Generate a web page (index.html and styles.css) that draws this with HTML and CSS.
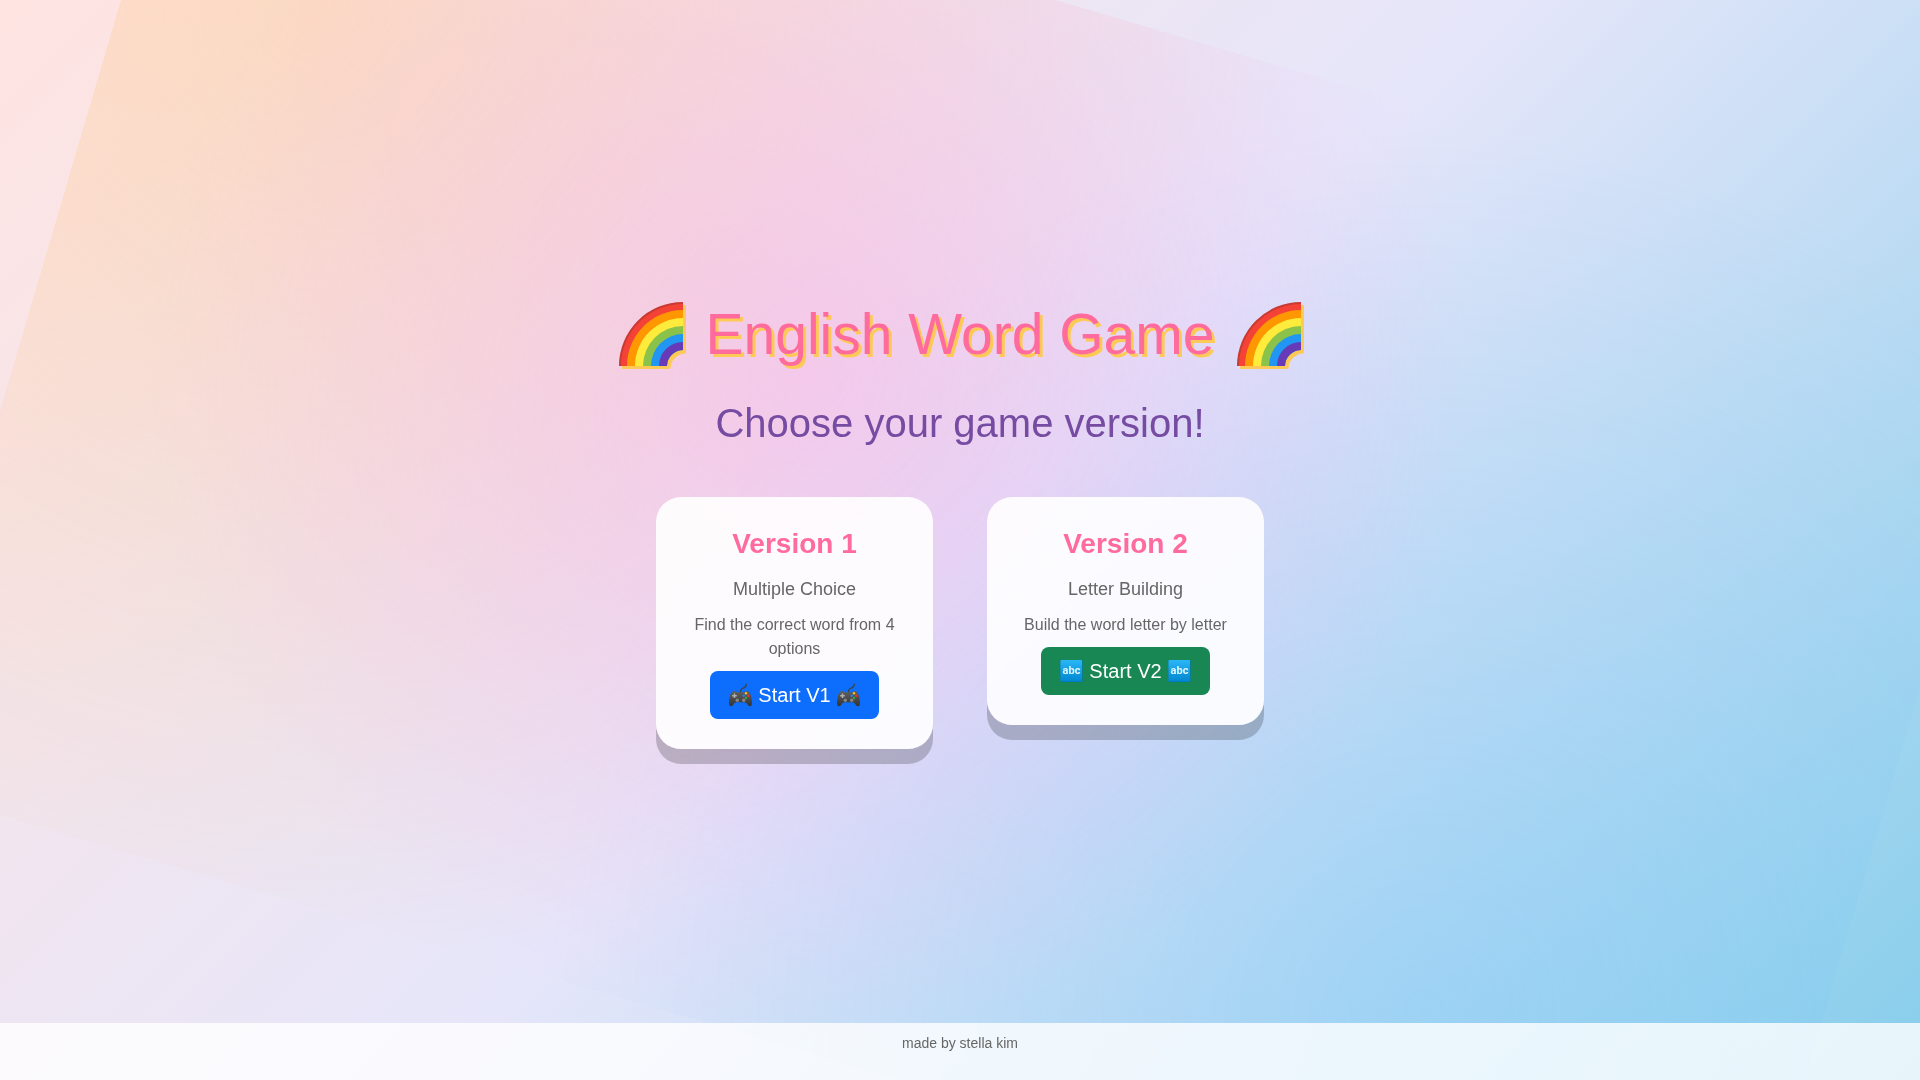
FILE: index.html
```
<!DOCTYPE html>
<html lang="en">
<head>
    <meta charset="UTF-8">
    <meta name="viewport" content="width=device-width, initial-scale=1.0">
    <title>English Word Game</title>
    <link rel="stylesheet" href="styles.css">
</head>
<body>
    <svg class="sprite" aria-hidden="true">
        <defs>
            <linearGradient id="pad-fill" x1="0" y1="0" x2="0" y2="1">
                <stop offset="0" stop-color="#616161" />
                <stop offset="1" stop-color="#333" />
            </linearGradient>
            <linearGradient id="abc-fill" x1="0" y1="0" x2="0" y2="1">
                <stop offset="0" stop-color="#29b6f6" />
                <stop offset="1" stop-color="#0288d1" />
            </linearGradient>
        </defs>
        <symbol id="rainbow" viewBox="0 0 64 64">
            <path d="M0 64A64 64 0 0 1 64 0V48A16 16 0 0 0 48 64Z" fill="#c93a32" />
            <path d="M2 64A62 62 0 0 1 64 2V48A16 16 0 0 0 48 64Z" fill="#f44336" />
            <path d="M8 64A56 56 0 0 1 64 8V48A16 16 0 0 0 48 64Z" fill="#ff9800" />
            <path d="M16 64A48 48 0 0 1 64 16V48A16 16 0 0 0 48 64Z" fill="#ffeb3b" />
            <path d="M24 64A40 40 0 0 1 64 24V48A16 16 0 0 0 48 64Z" fill="#8bc34a" />
            <path d="M32 64A32 32 0 0 1 64 32V48A16 16 0 0 0 48 64Z" fill="#2196f3" />
            <path d="M40 64A24 24 0 0 1 64 40V48A16 16 0 0 0 48 64Z" fill="#673ab7" />
        </symbol>
        <symbol id="gamepad" viewBox="0 0 25 24">
            <path d="M12.5 10C12.3 7 13 5.6 15 5.1S18.2 3.6 18.3 1.2" fill="none" stroke="#37474f" stroke-width="1.3" stroke-linecap="round" />
            <path d="M5 8.2C7 7.7 8 9.2 9.5 9.2H15.5C17 9.2 18 7.7 20 8.2C22.5 8.8 24 15 24 19.5C24 22.3 23.3 23.3 22 23.3C19.5 23.3 19.5 19.3 16.5 19.3H8.5C5.5 19.3 5.5 23.3 3 23.3C1.7 23.3 1 22.3 1 19.5C1 15 2.5 8.8 5 8.2Z" fill="url(#pad-fill)" />
            <path d="M6.5 10.5V15M4.2 12.7H8.8" stroke="#b0b0b0" stroke-width="1.5" />
            <circle cx="9.3" cy="17.3" r="1.7" fill="#858585" />
            <circle cx="15.7" cy="17.3" r="1.7" fill="#858585" />
            <circle cx="18" cy="10.3" r="1.2" fill="#fbc02d" />
            <circle cx="15.7" cy="12.7" r="1.2" fill="#1e88e5" />
            <circle cx="20.3" cy="12.7" r="1.2" fill="#e53935" />
            <circle cx="18" cy="15" r="1.2" fill="#43a047" />
        </symbol>
    </svg>
    <main class="home">
        <h1 class="title">
            <svg class="rainbow" aria-hidden="true"><use href="#rainbow" /></svg>
            English Word Game
            <svg class="rainbow" aria-hidden="true"><use href="#rainbow" /></svg>
        </h1>
        <h2 class="subtitle">Choose your game version!</h2>
        <div class="versions">
            <div class="version-card">
                <h3>Version 1</h3>
                <p class="mode">Multiple Choice</p>
                <p class="description">Find the correct word from 4 options</p>
                <button type="button" class="btn btn-primary">
                    <svg class="icon" aria-hidden="true"><use href="#gamepad" /></svg>
                    Start V1
                    <svg class="icon" aria-hidden="true"><use href="#gamepad" /></svg>
                </button>
            </div>
            <div class="version-card">
                <h3>Version 2</h3>
                <p class="mode">Letter Building</p>
                <p class="description">Build the word letter by letter</p>
                <button type="button" class="btn btn-success">
                    <svg class="icon" viewBox="0 0 25 24" aria-hidden="true">
                        <rect x="1.5" y="1" width="22" height="22" rx="1" fill="#0277bd" />
                        <rect x="1.5" y="1" width="21.5" height="21.3" rx="1" fill="url(#abc-fill)" />
                        <text x="12.5" y="15" text-anchor="middle" class="abc-text">abc</text>
                    </svg>
                    Start V2
                    <svg class="icon" viewBox="0 0 25 24" aria-hidden="true">
                        <rect x="1.5" y="1" width="22" height="22" rx="1" fill="#0277bd" />
                        <rect x="1.5" y="1" width="21.5" height="21.3" rx="1" fill="url(#abc-fill)" />
                        <text x="12.5" y="15" text-anchor="middle" class="abc-text">abc</text>
                    </svg>
                </button>
            </div>
        </div>
    </main>
    <footer class="footer">
        <p>made by stella kim</p>
    </footer>
</body>
</html>
```

FILE: styles.css
```
* {
    box-sizing: border-box;
}
body {
    margin: 0;
    min-height: 100vh;
    display: flex;
    flex-direction: column;
    font-family: "Liberation Sans", Arial, sans-serif;
    font-size: 16px;
    line-height: 24px;
    text-align: center;
    color: #666;
    background: linear-gradient(135deg, #ffe4e1 0%, #e6e6fa 50%, #87ceeb 100%);
    overflow: hidden;
}
/* tilted sheet of soft colour behind the page */
body::before {
    content: "";
    position: fixed;
    top: 0;
    left: 0;
    width: 100%;
    height: 100%;
    background:
        radial-gradient(circle at 40% 40%, rgba(255, 159, 243, 0.37) 0%, transparent 50%),
        radial-gradient(circle at 80% 80%, rgba(116, 196, 255, 0.25) 0%, transparent 50%),
        radial-gradient(circle at 10% 20%, rgba(255, 193, 112, 0.3) 0%, transparent 50%);
    transform: translate(4px, -4px) rotate(16.4deg);
    z-index: -1;
}
h1, h2, h3, p {
    margin: 0;
}
.sprite {
    position: absolute;
    width: 0;
    height: 0;
}
.home {
    flex: 1;
    display: flex;
    flex-direction: column;
    align-items: center;
    justify-content: center;
    padding: 24px 20px 0;
}
.title {
    font-size: 57px;
    font-weight: 500;
    line-height: 70px;
    color: #ff6b9d;
    text-shadow: 3px 3px 0 #feca57;
    margin-bottom: 30px;
}
.rainbow {
    width: 64px;
    height: 64px;
    margin: 0 7px;
    vertical-align: -12px;
    overflow: visible;
    filter: drop-shadow(3px 3px 0 #feca57);
}
.subtitle {
    font-size: 40px;
    font-weight: 500;
    line-height: 48px;
    color: #764ba2;
    margin-bottom: 50px;
}
.versions {
    display: flex;
    flex-wrap: wrap;
    justify-content: center;
    align-items: flex-start;
    gap: 54px;
}
.version-card {
    width: 277px;
    padding: 30px;
    background: rgba(255, 255, 255, 0.9);
    border-radius: 25px;
    box-shadow: 0 15px 0 rgba(0, 0, 0, 0.2);
}
.version-card h3 {
    font-size: 28px;
    line-height: 34px;
    color: #ff6b9d;
    margin-bottom: 15px;
}
.mode {
    font-size: 18px;
    line-height: 27px;
    margin-bottom: 10px;
}
.description {
    margin-bottom: 10px;
}
.btn {
    padding: 8px 17px;
    border: 1px solid transparent;
    border-radius: 8px;
    font-family: inherit;
    font-size: 20px;
    line-height: 30px;
    color: white;
    cursor: pointer;
}
.btn-primary {
    background-color: #0d6efd;
}
.btn-success {
    background-color: #198754;
}
.icon {
    width: 25px;
    height: 24px;
    vertical-align: -5px;
}
.abc-text {
    font-family: Roboto, sans-serif;
    font-size: 11px;
    font-weight: 700;
    fill: #e1f5fe;
}
.footer {
    padding: 8px 16px 25px;
    background: rgba(255, 255, 255, 0.8);
    font-size: 14px;
}
```
